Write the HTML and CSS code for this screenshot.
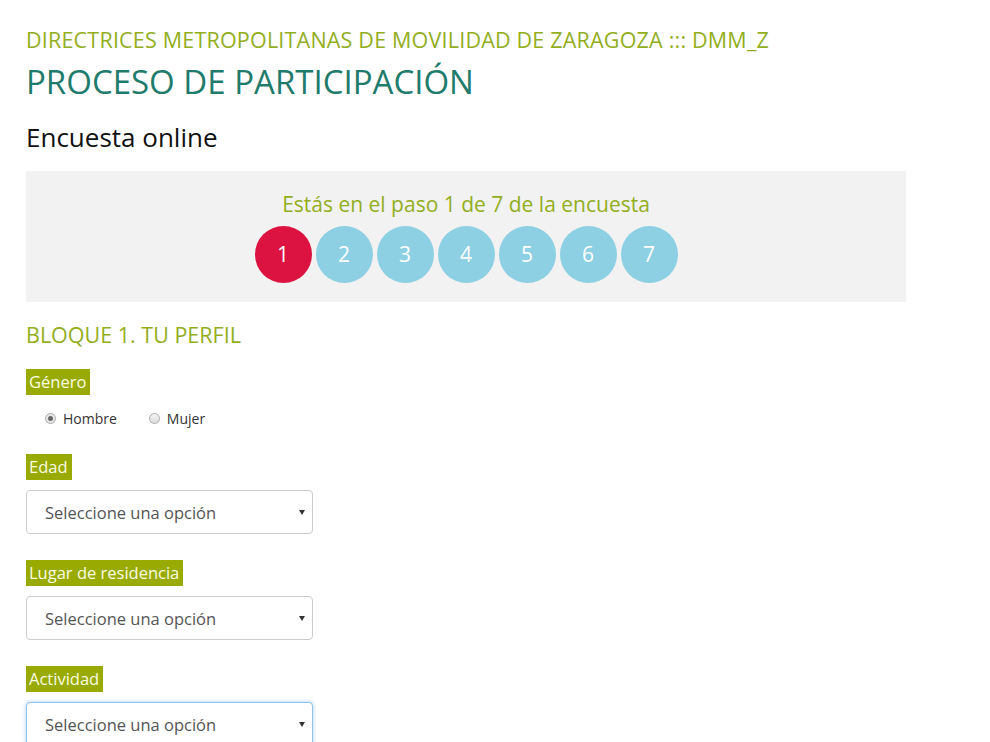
FILE: index.html
```html
<!DOCTYPE html>
<html lang="es">
<head>
  <meta charset="UTF-8" />
  <meta name="viewport" content="width=device-width, initial-scale=1.0"/>
  <title>Encuesta online - DMM_Z</title>
  <link rel="stylesheet" href="styles.css">
</head>
<body>
  <div class="page">
    <p class="site-name">DIRECTRICES METROPOLITANAS DE MOVILIDAD DE ZARAGOZA ::: DMM_Z</p>
    <h1 class="title">PROCESO DE PARTICIPACIÓN</h1>
    <h2 class="subtitle">Encuesta online</h2>

    <div class="steps-box">
      <p class="steps-text">Estás en el paso 1 de 7 de la encuesta</p>
      <div class="steps">
        <span class="step active">1</span>
        <span class="step">2</span>
        <span class="step">3</span>
        <span class="step">4</span>
        <span class="step">5</span>
        <span class="step">6</span>
        <span class="step">7</span>
      </div>
    </div>

    <h3 class="block-title">BLOQUE 1. TU PERFIL</h3>

    <form class="survey">
      <div class="field">
        <span class="label">Género</span>
        <div class="radios">
          <label class="radio"><input type="radio" name="genero" checked> Hombre</label>
          <label class="radio"><input type="radio" name="genero"> Mujer</label>
        </div>
      </div>

      <div class="field">
        <span class="label">Edad</span>
        <div class="select-wrap">
          <select class="select">
            <option>Seleccione una opción</option>
          </select>
        </div>
      </div>

      <div class="field">
        <span class="label">Lugar de residencia</span>
        <div class="select-wrap">
          <select class="select">
            <option>Seleccione una opción</option>
          </select>
        </div>
      </div>

      <div class="field">
        <span class="label">Actividad</span>
        <div class="select-wrap">
          <select class="select focused">
            <option>Seleccione una opción</option>
          </select>
        </div>
      </div>
    </form>
  </div>
</body>
</html>
```

FILE: styles.css
```css
body {
  margin: 0;
  background: #fff;
  font-family: "Open Sans", "DejaVu Sans", sans-serif;
  color: #222;
}

.page {
  padding: 27px 26px 0;
  width: 880px;
}

.site-name {
  margin: 0;
  font-size: 21.5px;
  line-height: 26px;
  color: #93ae1d;
  letter-spacing: 0.2px;
  white-space: nowrap;
}

.title {
  margin: 9px 0 0;
  font-size: 33px;
  line-height: 40px;
  font-weight: 400;
  color: #1f7b6c;
}

.subtitle {
  margin: 19px 0 0;
  font-size: 26px;
  line-height: 32px;
  font-weight: 400;
  color: #111;
}

.steps-box {
  margin-top: 18px;
  height: 131px;
  box-sizing: border-box;
  padding-top: 20px;
  background: #f2f2f2;
  text-align: center;
}

.steps-text {
  margin: 0;
  font-size: 21px;
  line-height: 26px;
  color: #93ae1d;
}

.steps {
  margin-top: 9px;
  display: flex;
  justify-content: center;
  gap: 4px;
}

.step {
  width: 57px;
  height: 57px;
  border-radius: 50%;
  background: #8dd0e3;
  color: #fff;
  font-size: 21px;
  line-height: 57px;
}

.step.active {
  background: #dc1340;
}

.block-title {
  margin: 20px 0 0;
  font-size: 21.5px;
  line-height: 26px;
  font-weight: 500;
  color: #93ae1d;
}

.survey {
  margin-top: 21px;
}

.field {
  margin-bottom: 26px;
}

.label {
  display: inline-block;
  vertical-align: top;
  padding: 0 4px 0 3px;
  height: 26px;
  line-height: 26px;
  font-size: 16.5px;
  font-weight: 500;
  color: #fbfbe2;
  background: #99ab02;
}

.radios {
  display: flex;
  gap: 32px;
  padding: 11px 0 0 19px;
  height: 22px;
}

.radio {
  display: flex;
  align-items: center;
  gap: 7px;
  height: 24px;
  font-size: 14px;
  color: #333;
}

.radio input {
  appearance: none;
  margin: 0;
  width: 11px;
  height: 11px;
  border: 1px solid #aaa;
  border-radius: 50%;
  background: linear-gradient(#f4f4f4, #dcdcdc);
}

.radio input:checked {
  background: radial-gradient(circle, #666 0 2px, #e6e6e6 3px);
}

.select-wrap {
  position: relative;
  margin-top: 10px;
  width: 287px;
}

.select-wrap::after {
  content: "";
  position: absolute;
  right: 8px;
  top: 20px;
  border-left: 3px solid transparent;
  border-right: 3px solid transparent;
  border-top: 5px solid #333;
  pointer-events: none;
}

.select {
  display: block;
  appearance: none;
  width: 100%;
  height: 44px;
  padding: 0 18px;
  border: 1px solid #ccc;
  border-radius: 4px;
  background: #fff;
  font-family: inherit;
  font-size: 16.5px;
  color: #555;
}

.select.focused {
  border-color: #8fc3ea;
  box-shadow: 0 0 4px rgba(102, 175, 233, 0.6);
}
```
